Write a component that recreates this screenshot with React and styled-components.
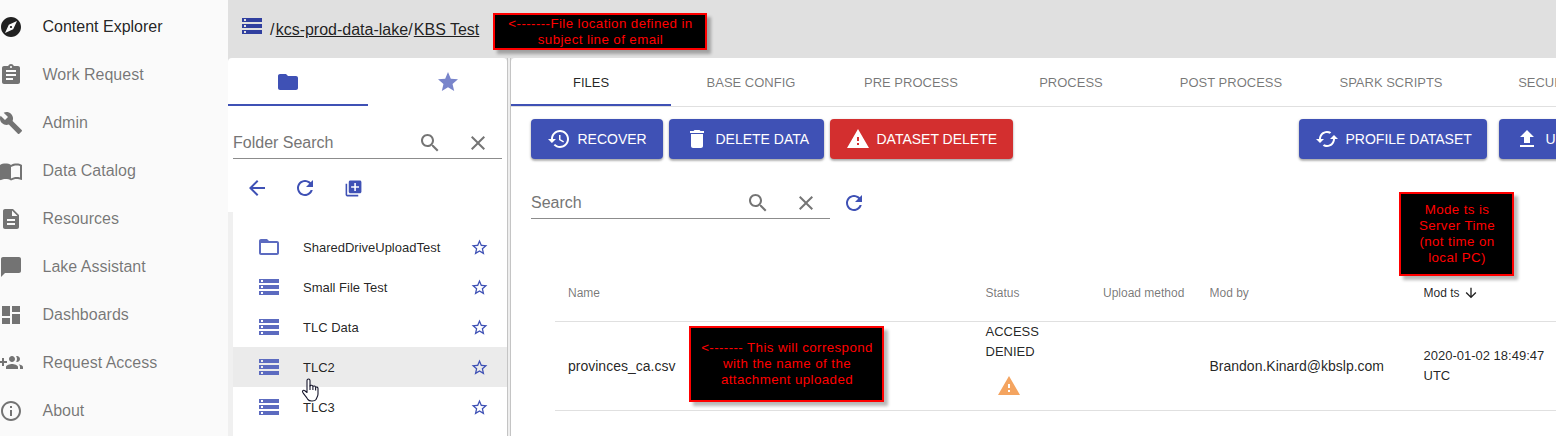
import React from "react";
import styled, { createGlobalStyle, css } from "styled-components";

const primary = "#3f51b5";
const textPrimary = "rgba(0, 0, 0, 0.87)";
const textSecondary = "rgba(0, 0, 0, 0.54)";
const divider = "#e0e0e0";

const GlobalStyle = createGlobalStyle`
  * { box-sizing: border-box; }
  body {
    margin: 0;
    overflow: hidden;
    background: #f0f0f0;
    color: ${textPrimary};
    font-family: "Liberation Sans", Arial, sans-serif;
    font-size: 13px;
  }
`;

const PATHS = {
  explore:
    "M12 10.9c-.61 0-1.1.49-1.1 1.1s.49 1.1 1.1 1.1c.61 0 1.1-.49 1.1-1.1s-.49-1.1-1.1-1.1zM12 2C6.48 2 2 6.48 2 12s4.48 10 10 10 10-4.48 10-10S17.52 2 12 2zm2.19 12.19L6 18l3.81-8.19L18 6l-3.81 8.19z",
  assignment:
    "M19 3h-4.18C14.4 1.84 13.3 1 12 1c-1.3 0-2.4.84-2.82 2H5c-1.1 0-2 .9-2 2v14c0 1.1.9 2 2 2h14c1.1 0 2-.9 2-2V5c0-1.1-.9-2-2-2zm-7 0c.55 0 1 .45 1 1s-.45 1-1 1-1-.45-1-1 .45-1 1-1zm2 14H7v-2h7v2zm3-4H7v-2h10v2zm0-4H7V7h10v2z",
  build:
    "M22.7 19l-9.1-9.1c.9-2.3.4-5-1.5-6.9-2-2-5-2.4-7.4-1.3L9 6 6 9 1.6 4.7C.4 7.1.9 10.1 2.9 12.1c1.9 1.9 4.6 2.4 6.9 1.5l9.1 9.1c.4.4 1 .4 1.4 0l2.3-2.3c.5-.4.5-1.1.1-1.4z",
  book:
    "M21 5c-1.11-.35-2.33-.5-3.5-.5-1.95 0-4.05.4-5.5 1.5-1.45-1.1-3.55-1.5-5.5-1.5S2.45 4.9 1 6v14.65c0 .25.25.5.5.5.1 0 .15-.05.25-.05C3.1 20.45 5.05 20 6.5 20c1.95 0 4.05.4 5.5 1.5 1.35-.85 3.8-1.5 5.5-1.5 1.65 0 3.35.3 4.75 1.05.1.05.15.05.25.05.25 0 .5-.25.5-.5V6c-.6-.45-1.25-.75-2-1zm0 13.5c-1.1-.35-2.3-.5-3.5-.5-1.7 0-4.15.65-5.5 1.5V8c1.35-.85 3.8-1.5 5.5-1.5 1.2 0 2.4.15 3.5.5v11.5z",
  description:
    "M14 2H6c-1.1 0-1.99.9-1.99 2L4 20c0 1.1.89 2 1.99 2H18c1.1 0 2-.9 2-2V8l-6-6zm2 16H8v-2h8v2zm0-4H8v-2h8v2zm-3-5V3.5L18.5 9H13z",
  chat: "M20 2H4c-1.1 0-2 .9-2 2v18l4-4h14c1.1 0 2-.9 2-2V4c0-1.1-.9-2-2-2z",
  dashboard: "M3 13h8V3H3v10zm0 8h8v-6H3v6zm10 0h8V11h-8v10zm0-18v6h8V3h-8z",
  groupAdd:
    "M8 10H5V7H3v3H0v2h3v3h2v-3h3v-2zm10 1c1.66 0 2.99-1.34 2.99-3S19.66 5 18 5c-.32 0-.63.05-.91.14.57.81.9 1.79.9 2.86s-.34 2.04-.9 2.86c.28.09.59.14.91.14zm-5 0c1.66 0 2.99-1.34 2.99-3S14.66 5 13 5c-1.66 0-3 1.34-3 3s1.34 3 3 3zm6.62 2.16c.83.73 1.38 1.66 1.38 2.84v2h3v-2c0-1.54-2.37-2.49-4.38-2.84zM13 13c-2 0-6 1-6 3v2h12v-2c0-2-4-3-6-3z",
  info:
    "M11 17h2v-6h-2v6zm1-15C6.48 2 2 6.48 2 12s4.48 10 10 10 10-4.48 10-10S17.52 2 12 2zm0 18c-4.41 0-8-3.59-8-8s3.59-8 8-8 8 3.59 8 8-3.59 8-8 8zM11 9h2V7h-2v2z",
  storage:
    "M2 20h20v-4H2v4zm2-3h2v2H4v-2zM2 4v4h20V4H2zm4 3H4V5h2v2zm-4 7h20v-4H2v4zm2-3h2v2H4v-2z",
  folder: "M10 4H4c-1.1 0-1.99.9-1.99 2L2 18c0 1.1.9 2 2 2h16c1.1 0 2-.9 2-2V8c0-1.1-.9-2-2-2h-8l-2-2z",
  folderOpen:
    "M20 6h-8l-2-2H4c-1.1 0-1.99.9-1.99 2L2 18c0 1.1.9 2 2 2h16c1.1 0 2-.9 2-2V8c0-1.1-.9-2-2-2zm0 12H4V8h16v10z",
  star: "M12 17.27L18.18 21l-1.64-7.03L22 9.24l-7.19-.61L12 2 9.19 8.63 2 9.24l5.46 4.73L5.82 21z",
  starBorder:
    "M22 9.24l-7.19-.62L12 2 9.19 8.63 2 9.24l5.46 4.73L5.82 21 12 17.27 18.18 21l-1.63-7.03L22 9.24zM12 15.4l-3.76 2.27 1-4.28-3.32-2.88 4.38-.38L12 6.1l1.71 4.04 4.38.38-3.32 2.88 1 4.28L12 15.4z",
  search:
    "M15.5 14h-.79l-.28-.27C15.41 12.59 16 11.11 16 9.5 16 5.91 13.09 3 9.5 3S3 5.91 3 9.5 5.91 16 9.5 16c1.61 0 3.09-.59 4.23-1.57l.27.28v.79l5 4.99L20.49 19l-4.99-5zm-6 0C7.01 14 5 11.99 5 9.5S7.01 5 9.5 5 14 7.01 14 9.5 11.99 14 9.5 14z",
  close:
    "M19 6.41L17.59 5 12 10.59 6.41 5 5 6.41 10.59 12 5 17.59 6.41 19 12 13.41 17.59 19 19 17.59 13.41 12z",
  back: "M20 11H7.83l5.59-5.59L12 4l-8 8 8 8 1.41-1.41L7.83 13H20v-2z",
  refresh:
    "M17.65 6.35C16.2 4.9 14.21 4 12 4c-4.42 0-7.99 3.58-7.99 8s3.57 8 7.99 8c3.73 0 6.84-2.55 7.73-6h-2.08c-.82 2.33-3.04 4-5.65 4-3.31 0-6-2.69-6-6s2.69-6 6-6c1.66 0 3.14.69 4.22 1.78L13 11h7V4l-2.35 2.35z",
  libraryAdd:
    "M4 6H2v14c0 1.1.9 2 2 2h14v-2H4V6zm16-4H8c-1.1 0-2 .9-2 2v12c0 1.1.9 2 2 2h12c1.1 0 2-.9 2-2V4c0-1.1-.9-2-2-2zm-1 9h-4v4h-2v-4H9V9h4V5h2v4h4v2z",
  restore:
    "M13 3c-4.97 0-9 4.03-9 9H1l3.89 3.89.07.14L9 12H6c0-3.87 3.13-7 7-7s7 3.13 7 7-3.13 7-7 7c-1.93 0-3.68-.79-4.94-2.06l-1.42 1.42C8.27 19.99 10.51 21 13 21c4.97 0 9-4.03 9-9s-4.03-9-9-9zm-1 5v5l4.28 2.54.72-1.21-3.5-2.08V8H12z",
  trash: "M6 19c0 1.1.9 2 2 2h8c1.1 0 2-.9 2-2V7H6v12zM19 4h-3.5l-1-1h-5l-1 1H5v2h14V4z",
  warning: "M1 21h22L12 2 1 21zm12-3h-2v-2h2v2zm0-4h-2v-4h2v4z",
  cached:
    "M19 8l-4 4h3c0 3.31-2.69 6-6 6-1.01 0-1.97-.25-2.8-.7l-1.46 1.46C8.97 19.54 10.43 20 12 20c4.42 0 8-3.58 8-8h3l-4-4zM6 12c0-3.31 2.69-6 6-6 1.01 0 1.97.25 2.8.7l1.46-1.46C15.03 4.46 13.57 4 12 4c-4.42 0-8 3.58-8 8H1l4 4 4-4H6z",
  upload: "M5 20h14v-2H5v2zm0-10h4v6h6v-6h4l-7-7-7 7z",
  down: "M20 12l-1.41-1.41L13 16.17V4h-2v12.17l-5.58-5.59L4 12l8 8 8-8z",
};

const Svg = styled.svg`
  display: block;
  flex: none;
  width: ${(p) => p.$size}px;
  height: ${(p) => p.$size}px;
  fill: ${(p) => p.$color};
`;

const Icon = ({ name, size = 24, color = "currentColor" }) => (
  <Svg viewBox="0 0 24 24" $size={size} $color={color}>
    <path d={PATHS[name]} />
  </Svg>
);

const Page = styled.div`
  position: relative;
  display: flex;
  width: 1556px;
  height: 436px;
  overflow: hidden;
`;

const Sidebar = styled.nav`
  flex: none;
  width: 228px;
  padding-top: 3px;
  background: #fafafa;
`;

const NavItem = styled.a`
  display: flex;
  align-items: center;
  gap: 19.5px;
  height: 48px;
  margin-left: -1px;
  font-size: 16px;
  color: ${(p) => (p.$active ? textPrimary : textSecondary)};
`;

const Content = styled.div`
  display: flex;
  flex-direction: column;
  flex: 1;
  min-width: 0;
  background: #f0f0f0;
`;

const Header = styled.header`
  display: flex;
  flex: none;
  height: 58px;
  padding: 14px 0 0 12px;
  gap: 6px;
  background: #e0e0e0;
`;

const Breadcrumb = styled.div`
  padding-top: 6px;
  font-size: 16px;
  line-height: 20px;
  color: ${textPrimary};
`;

const Slash = styled.span`
  margin-right: 1.2px;
`;

const Crumb = styled.span`
  text-decoration: underline;
`;

const Panels = styled.div`
  display: flex;
  flex: 1;
  min-height: 0;
  background: linear-gradient(#e0e0e0 8px, #f0f0f0 8px);
`;

const FolderPanel = styled.aside`
  display: flex;
  flex-direction: column;
  flex: none;
  width: 279px;
`;

const FolderTop = styled.div`
  flex: none;
  height: 154px;
  background: #fff;
  border-radius: 4px 4px 0 0;
  overflow: hidden;
`;

const FolderTabs = styled.div`
  display: flex;
  width: 320px;
  height: 48px;
  margin-left: -20px;
`;

const Tab = styled.div`
  display: flex;
  flex: none;
  align-items: center;
  justify-content: center;
  width: 160px;
  height: 48px;
  color: ${(p) => (p.$active ? textPrimary : textSecondary)};
  box-shadow: ${(p) => (p.$active ? `inset 0 -2px 0 ${primary}` : "none")};
`;

const SearchField = styled.div`
  display: flex;
  flex: none;
  align-items: center;
  width: ${(p) => p.$width}px;
  height: 32px;
  color: #757575;
  border-bottom: 1px solid #8c8c8c;
`;

const SearchText = styled.span`
  flex: 1;
  font-size: 16px;
`;

const SearchIcons = styled.div`
  display: flex;
  gap: 24px;
  margin-right: ${(p) => p.$end}px;
`;

const FolderSearch = styled.div`
  padding: 21px 0 0 5px;
`;

const FolderActions = styled.div`
  display: flex;
  align-items: center;
  height: 58px;
  padding-left: 17px;
`;

const ActionCell = styled.div`
  display: flex;
  justify-content: center;
  width: 24px;
  margin-right: 24px;
`;

const FolderList = styled.div`
  flex: 1;
  margin-left: 5px;
  padding-top: 15px;
  background: #fff;
`;

const FolderRow = styled.div`
  display: flex;
  align-items: center;
  height: 40px;
  padding: 0 18.5px 0 24px;
  background: ${(p) => (p.$hover ? "#ebebeb" : "#fff")};
`;

const FolderName = styled.span`
  flex: 1;
  margin-left: 22px;
`;

const Splitter = styled.div`
  flex: none;
  width: 4px;
  background: #eeeeee;
  border: solid #c4c4c4;
  border-width: 0 1px;
`;

const Main = styled.main`
  flex: 1;
  min-width: 0;
  overflow: hidden;
  background: #fff;
  border-radius: 4px 0 0 0;
`;

const TabBar = styled.div`
  display: flex;
  height: 49px;
  border-bottom: 1px solid ${divider};
`;

const Toolbar = styled.div`
  display: flex;
  gap: 6px;
  padding: 12px 0 0 20px;
`;

const ToolbarEnd = styled.div`
  display: flex;
  gap: 12px;
  margin-left: 280px;
`;

const Button = styled.button`
  display: flex;
  flex: none;
  align-items: center;
  gap: 6.5px;
  width: ${(p) => p.$width}px;
  height: 40px;
  padding: 0 0 0 16px;
  border: 0;
  border-radius: 4px;
  background: ${(p) => (p.$danger ? "#d32f2f" : primary)};
  color: #fff;
  font-family: inherit;
  font-size: 14px;
  white-space: nowrap;
  box-shadow: 0 1px 3px rgba(0, 0, 0, 0.25), 0 2px 2px rgba(0, 0, 0, 0.18);
`;

const FileSearch = styled.div`
  display: flex;
  align-items: center;
  gap: 12px;
  padding: 28px 0 0 20px;
`;

const Table = styled.div`
  margin-left: 44px;
  padding-top: 46px;
`;

const columns = css`
  display: grid;
  grid-template-columns: 417.5px 117.5px 106.5px 214px 1fr;
  padding-left: 13px;
  border-bottom: 1px solid ${divider};
`;

const HeadRow = styled.div`
  ${columns}
  align-items: center;
  height: 57px;
  font-size: 12px;
  color: ${textSecondary};
`;

const BodyRow = styled.div`
  ${columns}
  align-items: center;
  height: 89px;
  font-size: 14px;
`;

const SortLabel = styled.span`
  display: flex;
  align-items: center;
  gap: 3.5px;
  color: ${textPrimary};
`;

const Status = styled.div`
  align-self: start;
  width: 60px;
  font-size: 13px;
  line-height: 20px;
`;

const StatusIcon = styled.div`
  margin: 12px 0 0 11.5px;
`;

const Stamp = styled.div`
  font-size: 13px;
  line-height: 20px;
`;

const Callout = styled.div`
  position: absolute;
  left: ${(p) => p.$x}px;
  top: ${(p) => p.$y}px;
  display: flex;
  align-items: center;
  justify-content: center;
  width: ${(p) => p.$w}px;
  height: ${(p) => p.$h}px;
  padding-left: 1px;
  border: 2px solid #f00;
  background: #000;
  color: #f00;
  font-size: 13.33px;
  line-height: 16px;
  letter-spacing: 0.4px;
  text-align: center;
  white-space: pre;
  box-shadow: 4px 4px 3px rgba(0, 0, 0, 0.28);
`;

const Pointer = styled.svg`
  position: absolute;
  left: 301px;
  top: 378px;
  width: 18px;
  height: 24px;
`;

const navItems = [
  ["explore", "Content Explorer"],
  ["assignment", "Work Request"],
  ["build", "Admin"],
  ["book", "Data Catalog"],
  ["description", "Resources"],
  ["chat", "Lake Assistant"],
  ["dashboard", "Dashboards"],
  ["groupAdd", "Request Access"],
  ["info", "About"],
];

const folders = ["SharedDriveUploadTest", "Small File Test", "TLC Data", "TLC2", "TLC3"];

const tabs = ["FILES", "BASE CONFIG", "PRE PROCESS", "PROCESS", "POST PROCESS", "SPARK SCRIPTS", "SECURITY"];

export default function App() {
  return (
    <Page>
      <GlobalStyle />
      <Sidebar>
        {navItems.map(([icon, label], i) => (
          <NavItem key={label} $active={i === 0}>
            <Icon name={icon} />
            {label}
          </NavItem>
        ))}
      </Sidebar>
      <Content>
        <Header>
          <Icon name="storage" color="#303f9f" />
          <Breadcrumb>
            <Slash>/</Slash>
            <Crumb>kcs-prod-data-lake</Crumb>
            <Slash>/</Slash>
            <Crumb>KBS Test</Crumb>
          </Breadcrumb>
        </Header>
        <Panels>
          <FolderPanel>
            <FolderTop>
              <FolderTabs>
                <Tab $active>
                  <Icon name="folder" color={primary} />
                </Tab>
                <Tab>
                  <Icon name="star" color="#7985cb" />
                </Tab>
              </FolderTabs>
              <FolderSearch>
                <SearchField $width={269}>
                  <SearchText>Folder Search</SearchText>
                  <SearchIcons $end={12}>
                    <Icon name="search" />
                    <Icon name="close" />
                  </SearchIcons>
                </SearchField>
              </FolderSearch>
              <FolderActions>
                <ActionCell><Icon name="back" color={primary} /></ActionCell>
                <ActionCell><Icon name="refresh" color={primary} /></ActionCell>
                <ActionCell><Icon name="libraryAdd" size={19} color={primary} /></ActionCell>
              </FolderActions>
            </FolderTop>
            <FolderList>
              {folders.map((name, i) => (
                <FolderRow key={name} $hover={name === "TLC2"}>
                  <Icon name={i === 0 ? "folderOpen" : "storage"} color="#5c6bc0" />
                  <FolderName>{name}</FolderName>
                  <Icon name="starBorder" size={19} color={primary} />
                </FolderRow>
              ))}
            </FolderList>
          </FolderPanel>
          <Splitter />
          <Main>
            <TabBar>
              {tabs.map((t, i) => (
                <Tab key={t} $active={i === 0}>{t}</Tab>
              ))}
            </TabBar>
            <Toolbar>
              <Button $width={132}><Icon name="restore" />RECOVER</Button>
              <Button $width={155}><Icon name="trash" />DELETE DATA</Button>
              <Button $width={183} $danger><Icon name="warning" />DATASET DELETE</Button>
              <ToolbarEnd>
                <Button $width={188}><Icon name="cached" />PROFILE DATASET</Button>
                <Button $width={130}><Icon name="upload" />UPLOAD</Button>
              </ToolbarEnd>
            </Toolbar>
            <FileSearch>
              <SearchField $width={299}>
                <SearchText>Search</SearchText>
                <SearchIcons $end={12}>
                  <Icon name="search" />
                  <Icon name="close" />
                </SearchIcons>
              </SearchField>
              <Icon name="refresh" color={primary} />
            </FileSearch>
            <Table>
              <HeadRow>
                <span>Name</span>
                <span>Status</span>
                <span>Upload method</span>
                <span>Mod by</span>
                <SortLabel>
                  Mod ts
                  <Icon name="down" size={16} />
                </SortLabel>
              </HeadRow>
              <BodyRow>
                <span>provinces_ca.csv</span>
                <Status>
                  ACCESS
                  <br />
                  DENIED
                  <StatusIcon>
                    <Icon name="warning" color="#f4a460" />
                  </StatusIcon>
                </Status>
                <span />
                <span>Brandon.Kinard@kbslp.com</span>
                <Stamp>
                  2020-01-02 18:49:47
                  <br />
                  UTC
                </Stamp>
              </BodyRow>
            </Table>
          </Main>
        </Panels>
      </Content>
      <Callout $x={493} $y={13} $w={214} $h={37}>
        {"<-------File location defined in\nsubject line of email"}
      </Callout>
      <Callout $x={689} $y={326} $w={195} $h={76}>
        {"<------- This will correspond\nwith the name of the\nattachment uploaded"}
      </Callout>
      <Callout $x={1399} $y={192} $w={115} $h={84}>
        {"Mode ts is\nServer Time\n(not time on\nlocal PC)"}
      </Callout>
      <Pointer viewBox="0 0 18 24">
        <path
          d="M6 14.5V2.6C6 .5 9 .5 9 2.6V8c.4-1.2 2.7-1 2.9.5.6-.9 2.5-.6 2.7.8.8-.7 2.4-.2 2.4 1.3V16c0 2.5-1.3 3.5-1.8 5.2-1.2 2.4-7 2.5-8.4.2C5.7 18.8 3 16.8 1.7 14.3c-.8-1.7 1-2.7 2.2-1.5z"
          fill="#fff"
          stroke="#15152b"
          strokeWidth="1.1"
          strokeLinejoin="round"
        />
        <path d="M9 7.5v4.5M11.9 8.5V12M14.6 9.3v3.2" stroke="#15152b" strokeWidth="1.1" fill="none" />
      </Pointer>
    </Page>
  );
}
